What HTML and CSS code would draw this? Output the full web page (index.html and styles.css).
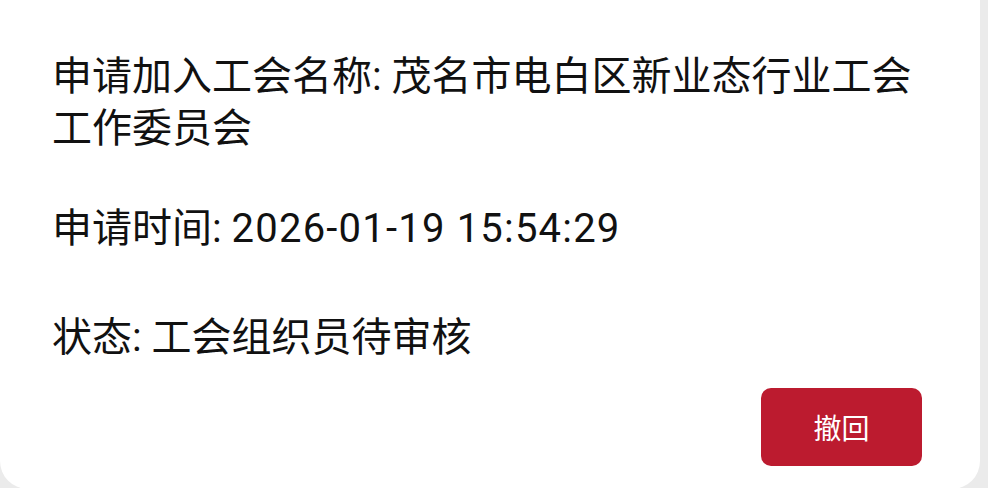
FILE: index.html
```html
<!DOCTYPE html>
<html lang="zh-CN">
<head>
<meta charset="utf-8">
<title>申请记录</title>
<link rel="stylesheet" href="styles.css">
</head>
<body>
<div class="card">
  <div class="info">
    <p class="row row-name">申请加入工会名称: 茂名市电白区新业态行业工会工作委员会</p>
    <p class="row row-time">申请时间: <span class="datetime">2026-01-19 15:54:29</span></p>
    <p class="row row-status">状态: 工会组织员待审核</p>
  </div>
  <div class="actions">
    <button class="btn-revoke" type="button">撤回</button>
  </div>
</div>
</body>
</html>
```

FILE: styles.css
```css
* { box-sizing: border-box; }
html, body {
  margin: 0;
  padding: 0;
  background: #ebebeb;
  width: 988px;
  height: 488px;
  overflow: hidden;
}
body {
  font-family: Roboto, "Noto Sans CJK SC", sans-serif;
  color: #111111;
}
.card {
  width: 980px;
  height: 489px;
  background: #ffffff;
  border-radius: 0 0 28px 28px;
  padding: 51px 52px 0 52px;
  display: flex;
  flex-direction: column;
}
.info {
  display: flex;
  flex-direction: column;
}
.row {
  margin: 0;
  font-size: 40px;
  line-height: 52px;
}
.row-name { margin-bottom: 48px; }
.row-time { margin-bottom: 57px; }
.datetime { letter-spacing: 1.2px; }
.actions {
  display: flex;
  justify-content: flex-end;
  margin-top: 24px;
  padding-right: 6px;
}
.btn-revoke {
  width: 161px;
  height: 78px;
  border: none;
  border-radius: 10px;
  background: #bc1b2f;
  color: #ffffff;
  font-family: Roboto, "Noto Sans CJK SC", sans-serif;
  font-size: 28px;
  padding: 0;
}
```
